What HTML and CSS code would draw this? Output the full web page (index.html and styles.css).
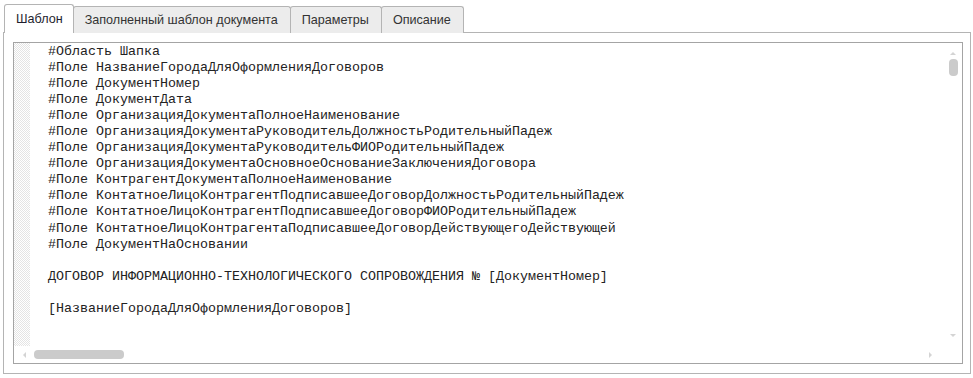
FILE: index.html
```html
<!DOCTYPE html>
<html lang="ru">

<head>
    <meta charset="UTF-8">
    <title>Шаблон</title>
    <link rel="stylesheet" href="styles.css">
</head>

<body>
    <div class="tabs">
        <div class="tab active">Шаблон</div>
        <div class="tab">Заполненный шаблон документа</div>
        <div class="tab">Параметры</div>
        <div class="tab">Описание</div>
    </div>
    <div class="panel">
        <div class="editor">
            <div class="gutter"></div>
            <pre class="code">#Область Шапка
#Поле НазваниеГородаДляОформленияДоговоров
#Поле ДокументНомер
#Поле ДокументДата
#Поле ОрганизацияДокументаПолноеНаименование
#Поле ОрганизацияДокументаРуководительДолжностьРодительныйПадеж
#Поле ОрганизацияДокументаРуководительФИОРодительныйПадеж
#Поле ОрганизацияДокументаОсновноеОснованиеЗаключенияДоговора
#Поле КонтрагентДокументаПолноеНаименование
#Поле КонтатноеЛицоКонтрагентПодписавшееДоговорДолжностьРодительныйПадеж
#Поле КонтатноеЛицоКонтрагентПодписавшееДоговорФИОРодительныйПадеж
#Поле КонтатноеЛицоКонтрагентаПодписавшееДоговорДействующегоДействующей
#Поле ДокументНаОсновании

ДОГОВОР ИНФОРМАЦИОННО-ТЕХНОЛОГИЧЕСКОГО СОПРОВОЖДЕНИЯ № [ДокументНомер]

[НазваниеГородаДляОформленияДоговоров]</pre>
            <div class="vscroll">
                <span class="arrow up"></span>
                <span class="thumb"></span>
                <span class="arrow down"></span>
            </div>
            <div class="hscroll">
                <span class="arrow left"></span>
                <span class="thumb"></span>
                <span class="arrow right"></span>
            </div>
            <div class="corner"></div>
        </div>
    </div>
</body>

</html>
```

FILE: styles.css
```css
* {
    margin: 0;
    padding: 0;
    box-sizing: border-box;
}

body {
    background: #fff;
    font-family: Arial, "Liberation Sans", sans-serif;
    font-size: 12.6px;
    color: #333;
}

.tabs {
    display: flex;
    align-items: flex-end;
    padding: 4px 0 0 4px;
    height: 33px;
    margin-bottom: -1px;
}

.tab {
    height: 27px;
    line-height: 26px;
    padding: 0 12px 0 11px;
    margin-left: -1px;
    background: #ececec;
    border: 1px solid #b4b4b4;
    border-bottom: none;
    border-radius: 3px 3px 0 0;
    color: #333;
    white-space: nowrap;
}

.tab:first-child {
    margin-left: 0;
}

.tab.active {
    height: 29px;
    line-height: 28px;
    background: #fff;
    color: #1e1e2e;
    position: relative;
    z-index: 1;
    padding: 0 10px 0 11px;
}

.panel {
    margin: 0 2px 0 3px;
    height: 342px;
    border: 1px solid #b4b4b4;
    padding: 9px 7px 9px 9px;
}

.editor {
    height: 100%;
    border: 1px solid #a4a4a4;
    display: grid;
    grid-template-columns: 16px 1fr 17px;
    grid-template-rows: 1fr 17px;
    overflow: hidden;
}

.gutter {
    background: repeating-conic-gradient(#e4e4e4 0 25%, #fff 0 50%) 0 0 / 2px 2px;
}

.code {
    padding: 1px 0 0 18px;
    font-family: "Courier New", "Liberation Mono", monospace;
    font-size: 13.33px;
    line-height: 16.05px;
    color: #222;
    overflow: hidden;
    white-space: pre;
}

.vscroll {
    display: flex;
    flex-direction: column;
    align-items: center;
    padding-top: 9px;
}

.vscroll .thumb {
    width: 9px;
    height: 17px;
    margin-top: 4px;
    margin-right: 1px;
    border-radius: 4px;
    background: #cbcbcb;
}

.vscroll .down {
    margin-top: auto;
    margin-bottom: 9px;
}

.hscroll {
    grid-column: 1 / 3;
    display: flex;
    align-items: center;
    padding-left: 9px;
    padding-right: 13px;
}

.hscroll .thumb {
    width: 90px;
    height: 9px;
    margin-left: 8px;
    border-radius: 4px;
    background: #cbcbcb;
}

.hscroll .right {
    margin-left: auto;
}

.arrow {
    width: 0;
    height: 0;
    border: 3px solid transparent;
}

.arrow.up {
    border-top: none;
    border-bottom: 3px solid #d4d4d4;
    margin-right: 1px;
}

.arrow.down {
    border-bottom: none;
    border-top: 3px solid #d4d4d4;
    margin-right: 1px;
}

.arrow.left {
    border-left: none;
    border-right: 3px solid #d4d4d4;
}

.arrow.right {
    border-right: none;
    border-left: 3px solid #d4d4d4;
}
```
